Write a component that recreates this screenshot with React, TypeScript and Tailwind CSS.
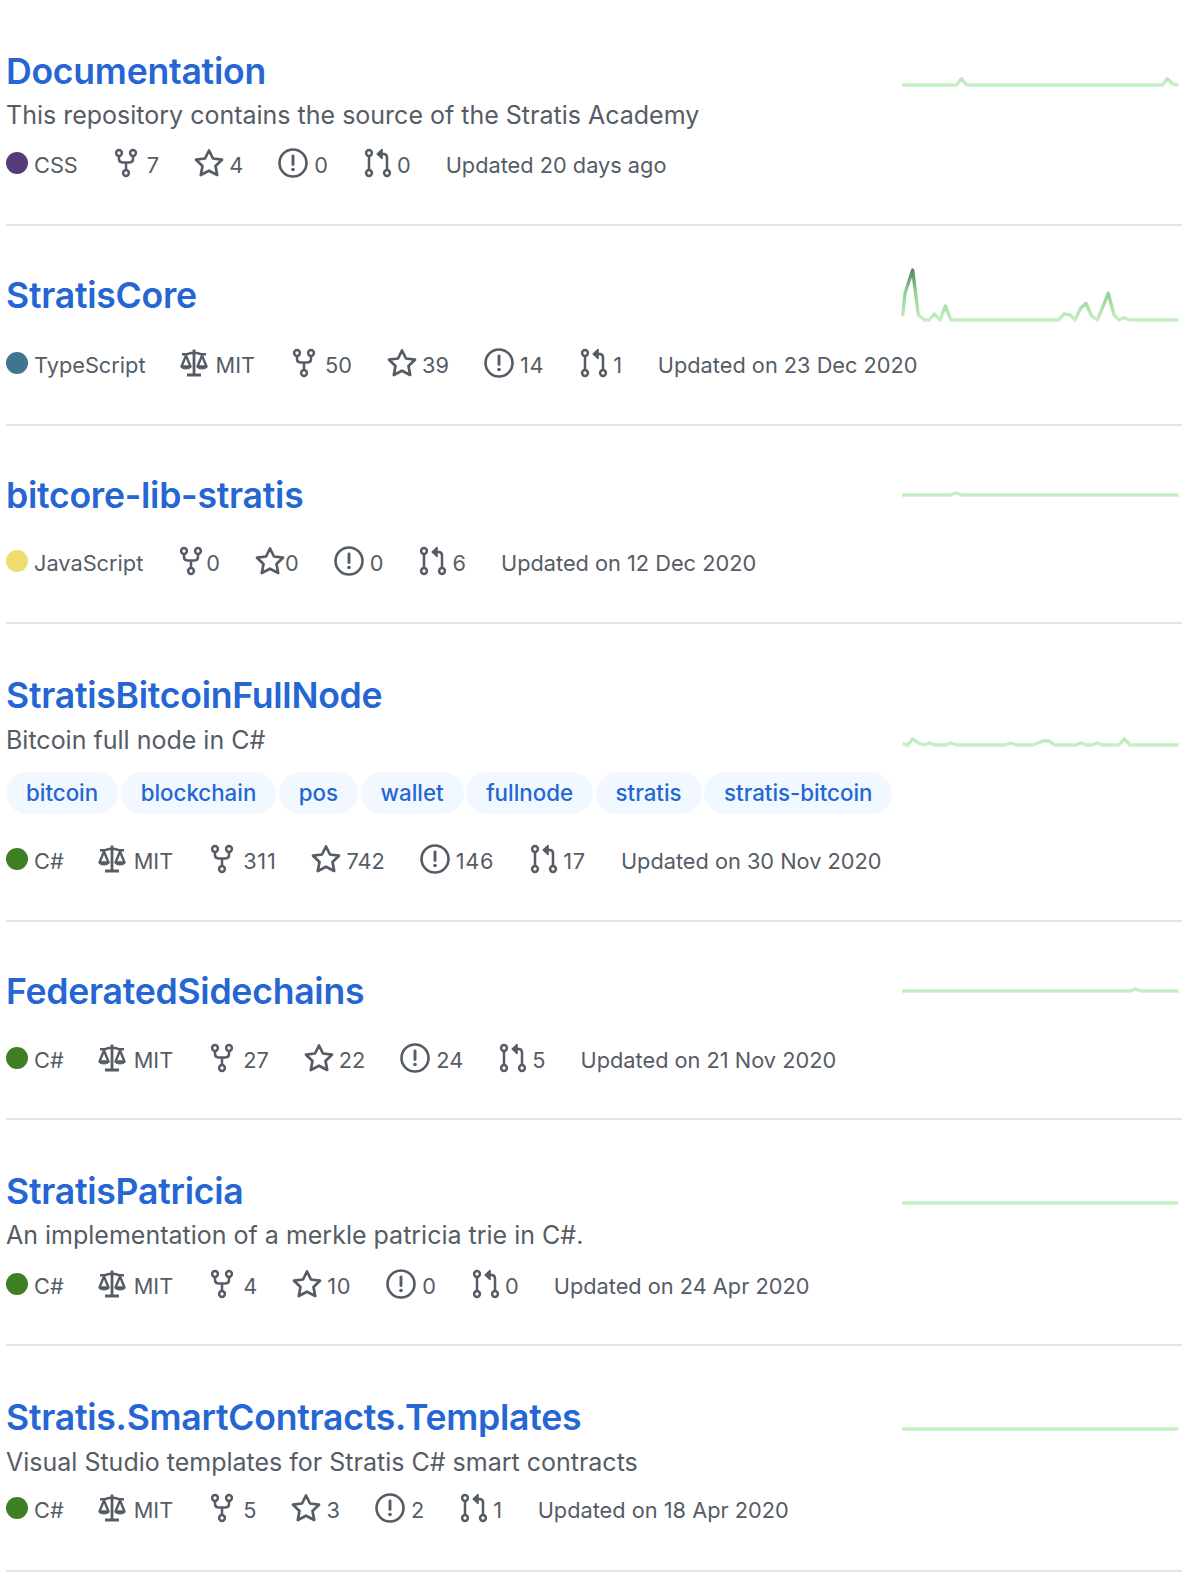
type Repo = {
  name: string;
  desc?: string;
  tags?: string[];
  lang: string;
  dot: string;
  license?: boolean;
  forks: number;
  stars: number;
  issues: number;
  prs: number;
  updated: string;
  tight?: boolean;
  rowClass: string;
  titleTop: string;
  descTop?: string;
  metaTop: string;
  sparkTop: string;
  points: string;
};

const repos: Repo[] = [
  {
    name: 'Documentation',
    desc: 'This repository contains the source of the Stratis Academy',
    lang: 'CSS',
    dot: 'bg-[#553d7c]',
    forks: 7,
    stars: 4,
    issues: 0,
    prs: 0,
    updated: 'Updated 20 days ago',
    rowClass: 'pb-[44px]',
    titleTop: 'pt-[50px]',
    descTop: 'mt-[6px]',
    metaTop: 'mt-[20px]',
    sparkTop: 'mt-[25px]',
    points: '6,180 170,180 184,161 200,180 788,180 802,161 818,177 835,180',
  },
  {
    name: 'StratisCore',
    lang: 'TypeScript',
    dot: 'bg-[#41758f]',
    license: true,
    forks: 50,
    stars: 39,
    issues: 14,
    prs: 1,
    updated: 'Updated on 23 Dec 2020',
    rowClass: 'pb-[44px]',
    titleTop: 'pt-[48px]',
    metaTop: 'mt-[32px]',
    sparkTop: 'mt-[34px]',
    points:
      '8,168 15,100 38,30 55,165 73,180 88,180 103,162 120,180 136,138 153,180 475,180 492,162 510,165 525,180 542,145 558,130 575,168 592,180 625,100 642,165 657,180 673,173 690,180 835,180',
  },
  {
    name: 'bitcore-lib-stratis',
    lang: 'JavaScript',
    dot: 'bg-[#efdc6e]',
    forks: 0,
    stars: 0,
    issues: 0,
    prs: 6,
    updated: 'Updated on 12 Dec 2020',
    tight: true,
    rowClass: 'pb-[44px]',
    titleTop: 'pt-[48px]',
    metaTop: 'mt-[30px]',
    sparkTop: 'mt-[9px]',
    points: '6,180 150,180 168,174 186,180 835,180',
  },
  {
    name: 'StratisBitcoinFullNode',
    desc: 'Bitcoin full node in C#',
    tags: ['bitcoin', 'blockchain', 'pos', 'wallet', 'fullnode', 'stratis', 'stratis-bitcoin'],
    lang: 'C#',
    dot: 'bg-[#3f7f24]',
    license: true,
    forks: 311,
    stars: 742,
    issues: 146,
    prs: 17,
    updated: 'Updated on 30 Nov 2020',
    rowClass: 'pb-[44px]',
    titleTop: 'pt-[50px]',
    descTop: 'mt-[7px]',
    metaTop: 'mt-[32px]',
    sparkTop: 'mt-[61px]',
    points:
      '8,176 22,181 38,162 55,174 72,180 88,174 105,180 136,180 152,174 170,180 315,180 332,174 348,180 398,180 430,168 447,168 463,180 528,180 542,174 560,180 576,180 592,174 608,180 657,180 673,162 690,180 835,180',
  },
  {
    name: 'FederatedSidechains',
    lang: 'C#',
    dot: 'bg-[#3f7f24]',
    license: true,
    forks: 27,
    stars: 22,
    issues: 24,
    prs: 5,
    updated: 'Updated on 21 Nov 2020',
    rowClass: 'pb-[43px]',
    titleTop: 'pt-[48px]',
    metaTop: 'mt-[31px]',
    sparkTop: 'mt-[9px]',
    points: '6,180 690,180 706,174 722,180 835,180',
  },
  {
    name: 'StratisPatricia',
    desc: 'An implementation of a merkle patricia trie in C#.',
    lang: 'C#',
    dot: 'bg-[#3f7f24]',
    license: true,
    forks: 4,
    stars: 10,
    issues: 0,
    prs: 0,
    updated: 'Updated on 24 Apr 2020',
    rowClass: 'pb-[43px]',
    titleTop: 'pt-[50px]',
    descTop: 'mt-[6px]',
    metaTop: 'mt-[21px]',
    sparkTop: 'mt-[23px]',
    points: '6,180 835,180',
  },
  {
    name: 'Stratis.SmartContracts.Templates',
    desc: 'Visual Studio templates for Stratis C# smart contracts',
    lang: 'C#',
    dot: 'bg-[#3f7f24]',
    license: true,
    forks: 5,
    stars: 3,
    issues: 2,
    prs: 1,
    updated: 'Updated on 18 Apr 2020',
    rowClass: 'pb-[45px]',
    titleTop: 'pt-[50px]',
    descTop: 'mt-[7px]',
    metaTop: 'mt-[18px]',
    sparkTop: 'mt-[23px]',
    points: '6,180 835,180',
  },
];

const iconClass = 'h-[30px] w-[30px] -mt-[5px] shrink-0';

const ForkIcon = () => (
  <svg viewBox="0 0 30 30" className={iconClass} fill="none" stroke="currentColor" strokeWidth="2.5">
    <circle cx="8" cy="5" r="2.9" />
    <circle cx="22" cy="5" r="2.9" />
    <circle cx="15" cy="25" r="2.9" />
    <path d="M8 8v3c0 2.2 1.2 3.4 3.4 3.4h7.2c2.2 0 3.4-1.2 3.4-3.4V8M15 14.5V22" />
  </svg>
);

const StarIcon = () => (
  <svg viewBox="0 0 30 30" className={iconClass} fill="none" stroke="currentColor" strokeWidth="2.7" strokeLinejoin="round">
    <polygon points="15,2.5 19,10.5 28,11.7 21.5,18 23.2,27 15,22.7 6.8,27 8.5,18 2,11.7 11,10.5" />
  </svg>
);

const IssueIcon = () => (
  <svg viewBox="0 0 30 30" className={iconClass} fill="none" stroke="currentColor" strokeWidth="2.6">
    <circle cx="15" cy="15" r="13.5" />
    <path d="M15 8v8.5" strokeWidth="2.9" strokeLinecap="round" />
    <circle cx="15" cy="21.5" r="1.8" fill="currentColor" stroke="none" />
  </svg>
);

const PullIcon = () => (
  <svg viewBox="0 0 30 30" className={iconClass} fill="none" stroke="currentColor" strokeWidth="2.5">
    <circle cx="6" cy="5" r="2.9" />
    <circle cx="6" cy="25" r="2.9" />
    <circle cx="24" cy="25" r="2.9" />
    <path d="M6 8v14M24 22V9.5c0-2.3-1.2-3.5-3.5-3.5H16" />
    <path d="M19 1.5 14.2 6l4.8 4.5Z" fill="currentColor" strokeWidth="1.6" strokeLinejoin="round" />
  </svg>
);

const LawIcon = () => (
  <svg viewBox="0 0 30 30" className={iconClass} fill="none" stroke="currentColor" strokeWidth="2.4" strokeLinejoin="round">
    <path d="M15 1.5V26M8 27h14" strokeWidth="2.8" />
    <path d="M3 6.2h5l4-1.2h6l4 1.2h5" />
    <path d="M7 7.5 2.5 18.5h9Z" />
    <path d="M23 7.5 18.5 18.5h9Z" />
    <path d="M2 19c1.2 2.6 8.8 2.6 10 0ZM18 19c1.2 2.6 8.8 2.6 10 0Z" fill="currentColor" strokeWidth="1" />
  </svg>
);

function Stat({ icon, value, gap }: { icon: React.ReactNode; value: number; gap: string }) {
  // the reference's 1 is wider than Inter's here
  const spacing = String(value).includes('1') ? 'tracking-[0.7px]' : '';
  return (
    <span className="mr-[35px] flex items-center">
      {icon}
      <span className={`${gap} ${spacing}`}>{value}</span>
    </span>
  );
}

function Spark({ points, id, className }: { points: string; id: string; className: string }) {
  return (
    <svg viewBox="0 0 840 210" className={`h-[70px] w-[280px] shrink-0 ${className}`} fill="none">
      <defs>
        <linearGradient id={id} gradientUnits="userSpaceOnUse" x1="0" y1="180" x2="0" y2="30">
          <stop offset="0" stopColor="#c6efc4" />
          <stop offset="0.6" stopColor="#86cf8c" />
          <stop offset="1" stopColor="#54865f" />
        </linearGradient>
      </defs>
      <polyline points={points} stroke={`url(#${id})`} strokeWidth="10" strokeLinejoin="round" />
    </svg>
  );
}

function RepoRow({ repo, index }: { repo: Repo; index: number }) {
  return (
    <li className={`flex border-b-2 border-[#e1e4e8] ${repo.rowClass}`}>
      <div className={`w-[894px] shrink-0 whitespace-nowrap ${repo.titleTop}`}>
        <h3 className="h-[44px] text-[35.6px] leading-[44px] font-semibold tracking-[-0.25px] text-[#2566d3]">{repo.name}</h3>
        {repo.desc && <p className={`h-[30px] text-[25px] leading-[30px] text-[#555c66] ${repo.descTop}`}>{repo.desc}</p>}
        {repo.tags && (
          <div className="mt-[17px] flex gap-[2.5px]">
            {repo.tags.map((tag) => (
              <span key={tag} className="h-[42px] rounded-full bg-[#f1f8ff] px-[20px] text-[22.3px] leading-[42px] font-medium text-[#2467d3]">
                {tag}
              </span>
            ))}
          </div>
        )}
        <div className={`flex h-[30px] items-center text-[21.75px] text-[#555c66] ${repo.metaTop}`}>
          <span className="mr-[33px] flex items-center">
            <span className={`mr-[6px] -mt-[5px] h-[22px] w-[22px] rounded-full ${repo.dot}`} />
            {repo.lang}
          </span>
          {repo.license && (
            <span className="mr-[34px] flex items-center">
              <LawIcon />
              <span className="ml-[7px]">MIT</span>
            </span>
          )}
          <Stat icon={<ForkIcon />} value={repo.forks} gap={repo.tight ? 'ml-0' : 'ml-[6px]'} />
          <Stat icon={<StarIcon />} value={repo.stars} gap={repo.tight ? 'ml-0' : 'ml-[5px]'} />
          <Stat icon={<IssueIcon />} value={repo.issues} gap="ml-[6px]" />
          <Stat icon={<PullIcon />} value={repo.prs} gap="ml-[4px]" />
          <span>{repo.updated}</span>
        </div>
      </div>
      <Spark points={repo.points} id={`spark-${index}`} className={repo.sparkTop} />
    </li>
  );
}

export default function App() {
  return (
    <div className="h-[1582px] overflow-hidden bg-white pr-[14px] pl-[6px] font-['Inter',sans-serif]">
      <ul>
        {repos.map((repo, index) => (
          <RepoRow key={repo.name} repo={repo} index={index} />
        ))}
      </ul>
    </div>
  );
}
